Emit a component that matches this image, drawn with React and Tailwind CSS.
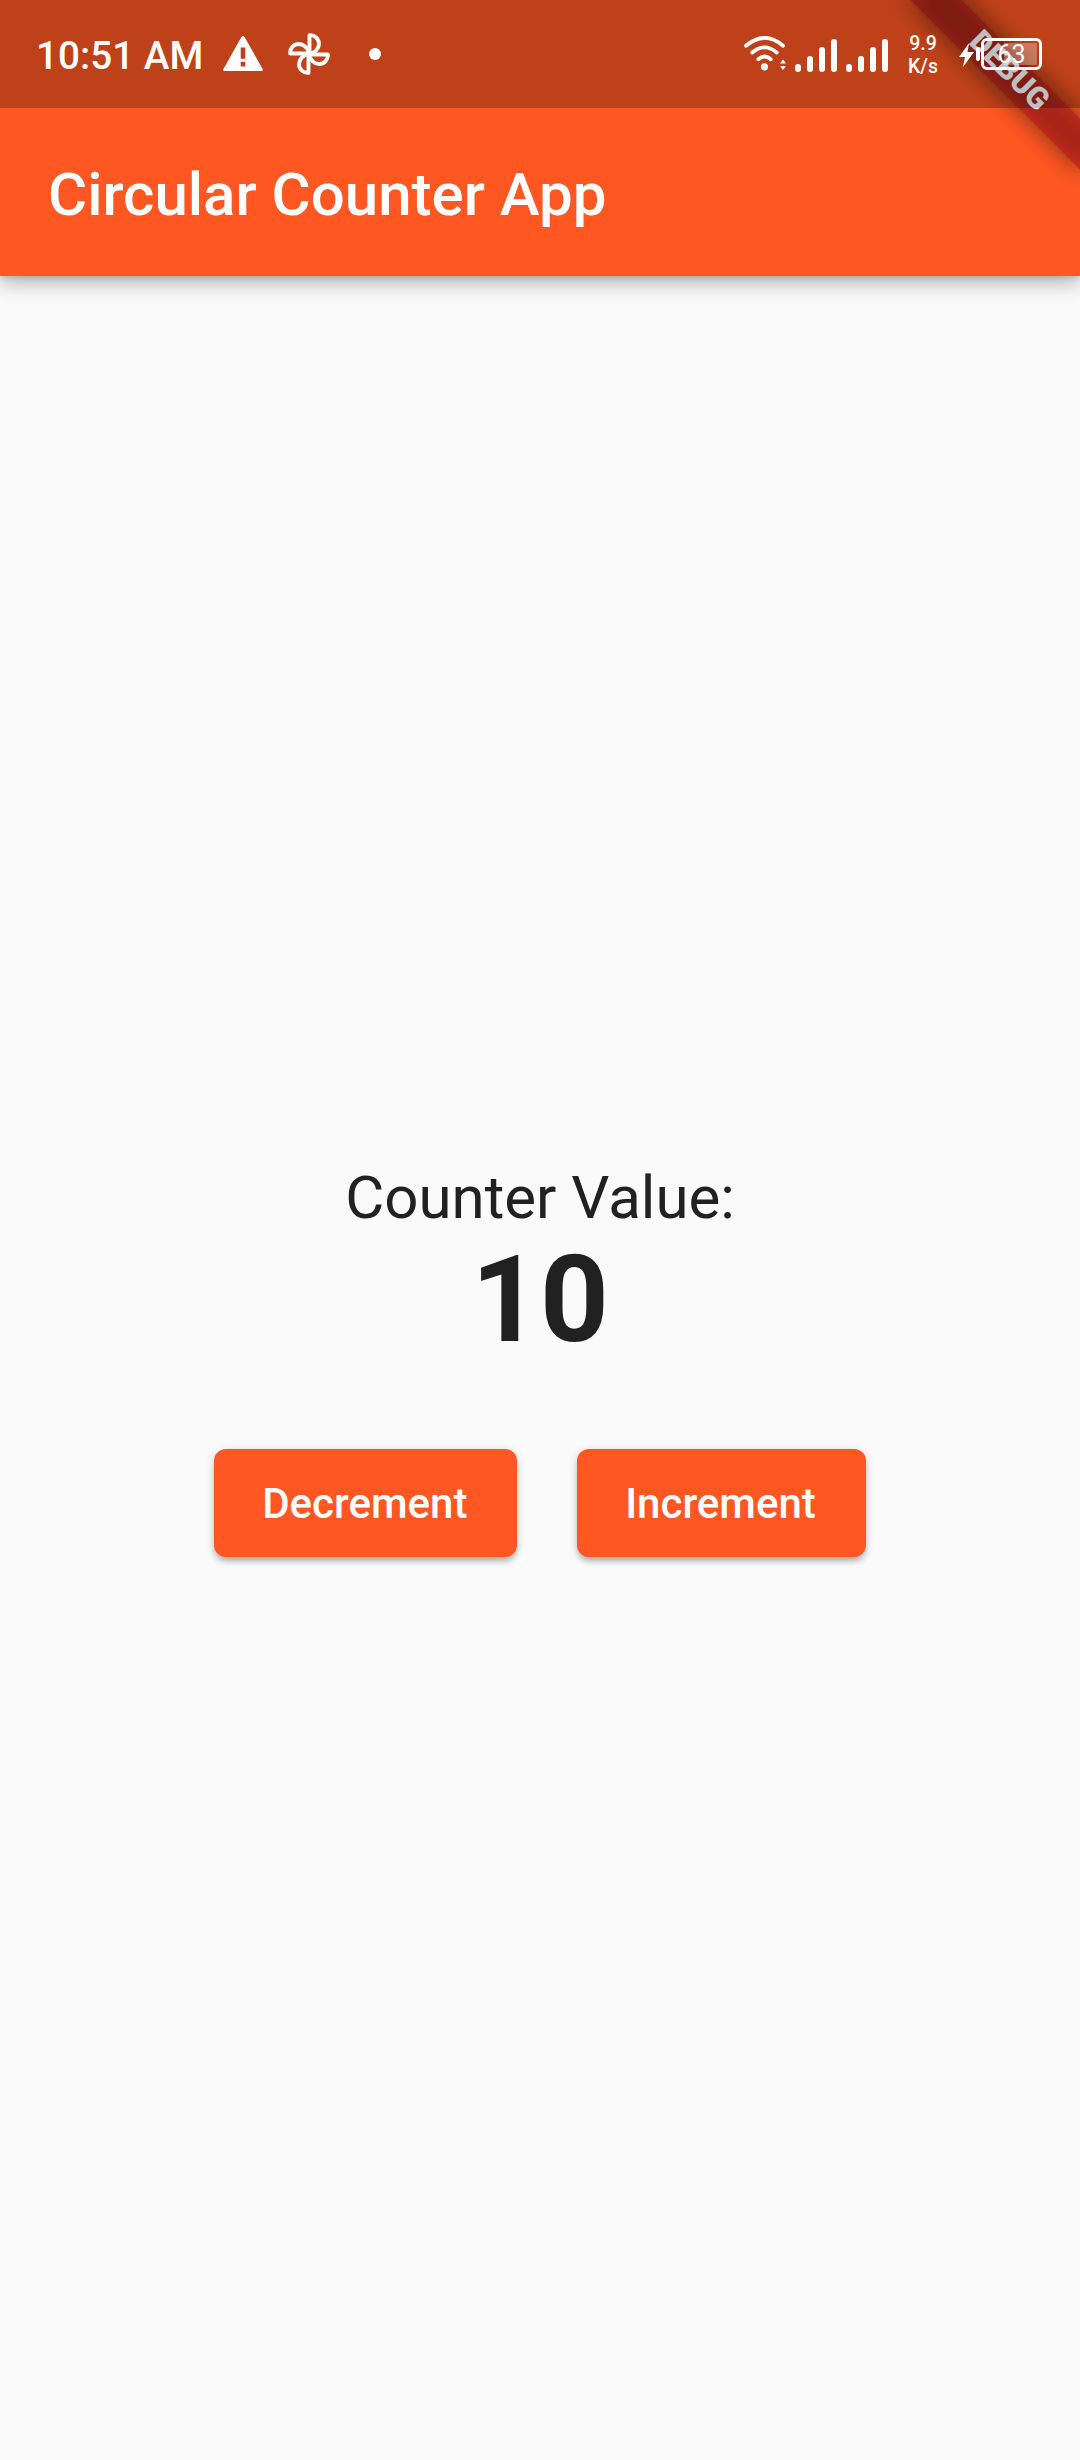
import { useState } from "react";

function WarningIcon() {
  return (
    <svg className="mb-[2px] ml-[21px] h-[35px] w-[40px] shrink-0" viewBox="0 0 40 35">
      <path
        fillRule="evenodd"
        fill="#fff"
        d="M18.4 1Q20 -1 21.6 1L39.6 33Q40.4 35 38.4 35H1.6Q-0.4 35 0.4 33ZM17.7 11.5V22.7H22.3V11.5ZM17.7 25.8V30.4H22.3V25.8Z"
      />
    </svg>
  );
}

function PinwheelIcon() {
  const blade = "M21.5 21V2.2C27 1.8 31 6 31 10.8C31 15.5 27 20 21.5 21Z";
  return (
    <svg
      className="ml-[25px] h-[42px] w-[42px] shrink-0"
      viewBox="0 0 42 42"
      fill="none"
      stroke="#fff"
      strokeWidth="3.9"
      strokeLinejoin="round"
    >
      <path d={blade} />
      <path d={blade} transform="rotate(90 21 21)" />
      <path d={blade} transform="rotate(180 21 21)" />
      <path d={blade} transform="rotate(270 21 21)" />
    </svg>
  );
}

function WifiIcon() {
  return (
    <svg
      className="mb-[2px] h-[35px] w-[43px] shrink-0"
      viewBox="0 0 43 35"
      fill="none"
      stroke="#fff"
      strokeWidth="3.8"
      strokeLinecap="round"
    >
      <path d="M2 9.7Q20.5 -5.9 39 9.7" />
      <path d="M8.2 16.5Q20.5 6.3 32.8 16.5" />
      <path d="M14.3 23.2Q20.5 17.8 26.7 23.2" />
      <circle cx="20.5" cy="30.8" r="3.6" fill="#fff" stroke="none" />
      <path d="M36 27.5L39 23.5L42 27.5ZM36 30L39 34L42 30Z" fill="#fff" stroke="none" />
    </svg>
  );
}

function SignalIcon() {
  return (
    <div className="flex h-[33px] w-[42.5px] shrink-0 items-end justify-between">
      <span className="h-[7.5px] w-[6px] rounded-full bg-white" />
      <span className="h-[16px] w-[6px] rounded-full bg-white" />
      <span className="h-[25px] w-[6px] rounded-full bg-white" />
      <span className="h-[33px] w-[6px] rounded-full bg-white" />
    </div>
  );
}

function StatusBar() {
  return (
    <div className="absolute inset-x-0 top-0 z-20 flex h-[108px] items-center bg-black/25 pl-[36px] pr-[38px] text-white">
      <span className="w-[166px] whitespace-nowrap pt-[4px] text-[38.7px] font-medium leading-[46px]">10:51 AM</span>
      <WarningIcon />
      <PinwheelIcon />
      <span className="ml-[39px] size-[12px] rounded-full bg-white" />
      <div className="ml-auto flex items-center">
        <WifiIcon />
        <div className="ml-[8px] flex gap-[8.5px] pt-[2px]">
          <SignalIcon />
          <SignalIcon />
        </div>
        <div className="ml-[19px] w-[31px] pt-[2px] text-center text-[19.5px] font-medium leading-[23px]">
          <div>9.9</div>
          <div>K/s</div>
        </div>
        <svg className="ml-[20px] mt-[2px] h-[24px] w-[15px]" viewBox="0 0 15 24" fill="#fff">
          <path d="M10 0L0 14H6L4 24L15 9H8.5Z" />
        </svg>
        <span className="ml-[2.5px] h-[14px] w-[4px] rounded-sm bg-white" />
        <div className="ml-[1px] flex h-[32px] w-[61px] items-center rounded-[6px] border-[3px] border-white bg-[linear-gradient(90deg,transparent_20px,rgba(255,255,255,0.3)_20px)] bg-clip-content p-[2px]">
          <span className="w-full pt-[2px] text-center text-[25px] leading-[24px]">63</span>
        </div>
      </div>
    </div>
  );
}

function DebugBanner() {
  return (
    <div className="pointer-events-none absolute right-0 top-0 z-10 size-[240px] overflow-hidden">
      <div className="absolute left-[48px] top-[54px] h-[36px] w-[240px] rotate-45">
        <div className="absolute inset-0 bg-black/50 blur-[12px]" />
        <div className="absolute inset-0 flex items-center justify-center bg-[#b71c1c]/63 pb-[3px] text-[30.6px] font-black leading-none text-white">
          DEBUG
        </div>
      </div>
    </div>
  );
}

function RaisedButton({ children, onClick, width }) {
  return (
    <button
      onClick={onClick}
      className={
        width +
        " h-[108px] rounded-[12px] bg-[#ff5722] pr-[2px] pt-[1px] text-[42px] font-medium leading-[49px] text-white shadow-[0_6px_6px_-2px_rgba(0,0,0,0.22),0_2px_8px_rgba(0,0,0,0.18)]"
      }
    >
      {children}
    </button>
  );
}

export default function App() {
  const [count, setCount] = useState(10);

  return (
    <div className="relative flex h-[2460px] w-[1080px] flex-col overflow-hidden bg-[#fafafa] font-['Roboto',sans-serif]">
      <StatusBar />
      <DebugBanner />
      <header className="flex h-[276px] shrink-0 items-center bg-[#ff5722] pl-[48px] pt-[114px] shadow-[0_8px_18px_rgba(0,0,0,0.26),0_2px_5px_rgba(0,0,0,0.12)]">
        <h1 className="whitespace-nowrap text-[60px] font-medium leading-[70px] text-white">Circular Counter App</h1>
      </header>
      <main className="flex flex-1 flex-col items-center justify-center text-[#212121]">
        <p className="pt-[1px] text-[60px] leading-[70px]">Counter Value:</p>
        <p className="text-[120px] font-bold leading-[134px]">{count}</p>
        <div className="mt-[64px] flex h-[144px] items-center gap-[60px]">
          <RaisedButton width="w-[303px]" onClick={() => setCount(count - 1)}>
            Decrement
          </RaisedButton>
          <RaisedButton width="w-[288.5px]" onClick={() => setCount(count + 1)}>
            Increment
          </RaisedButton>
        </div>
      </main>
    </div>
  );
}
